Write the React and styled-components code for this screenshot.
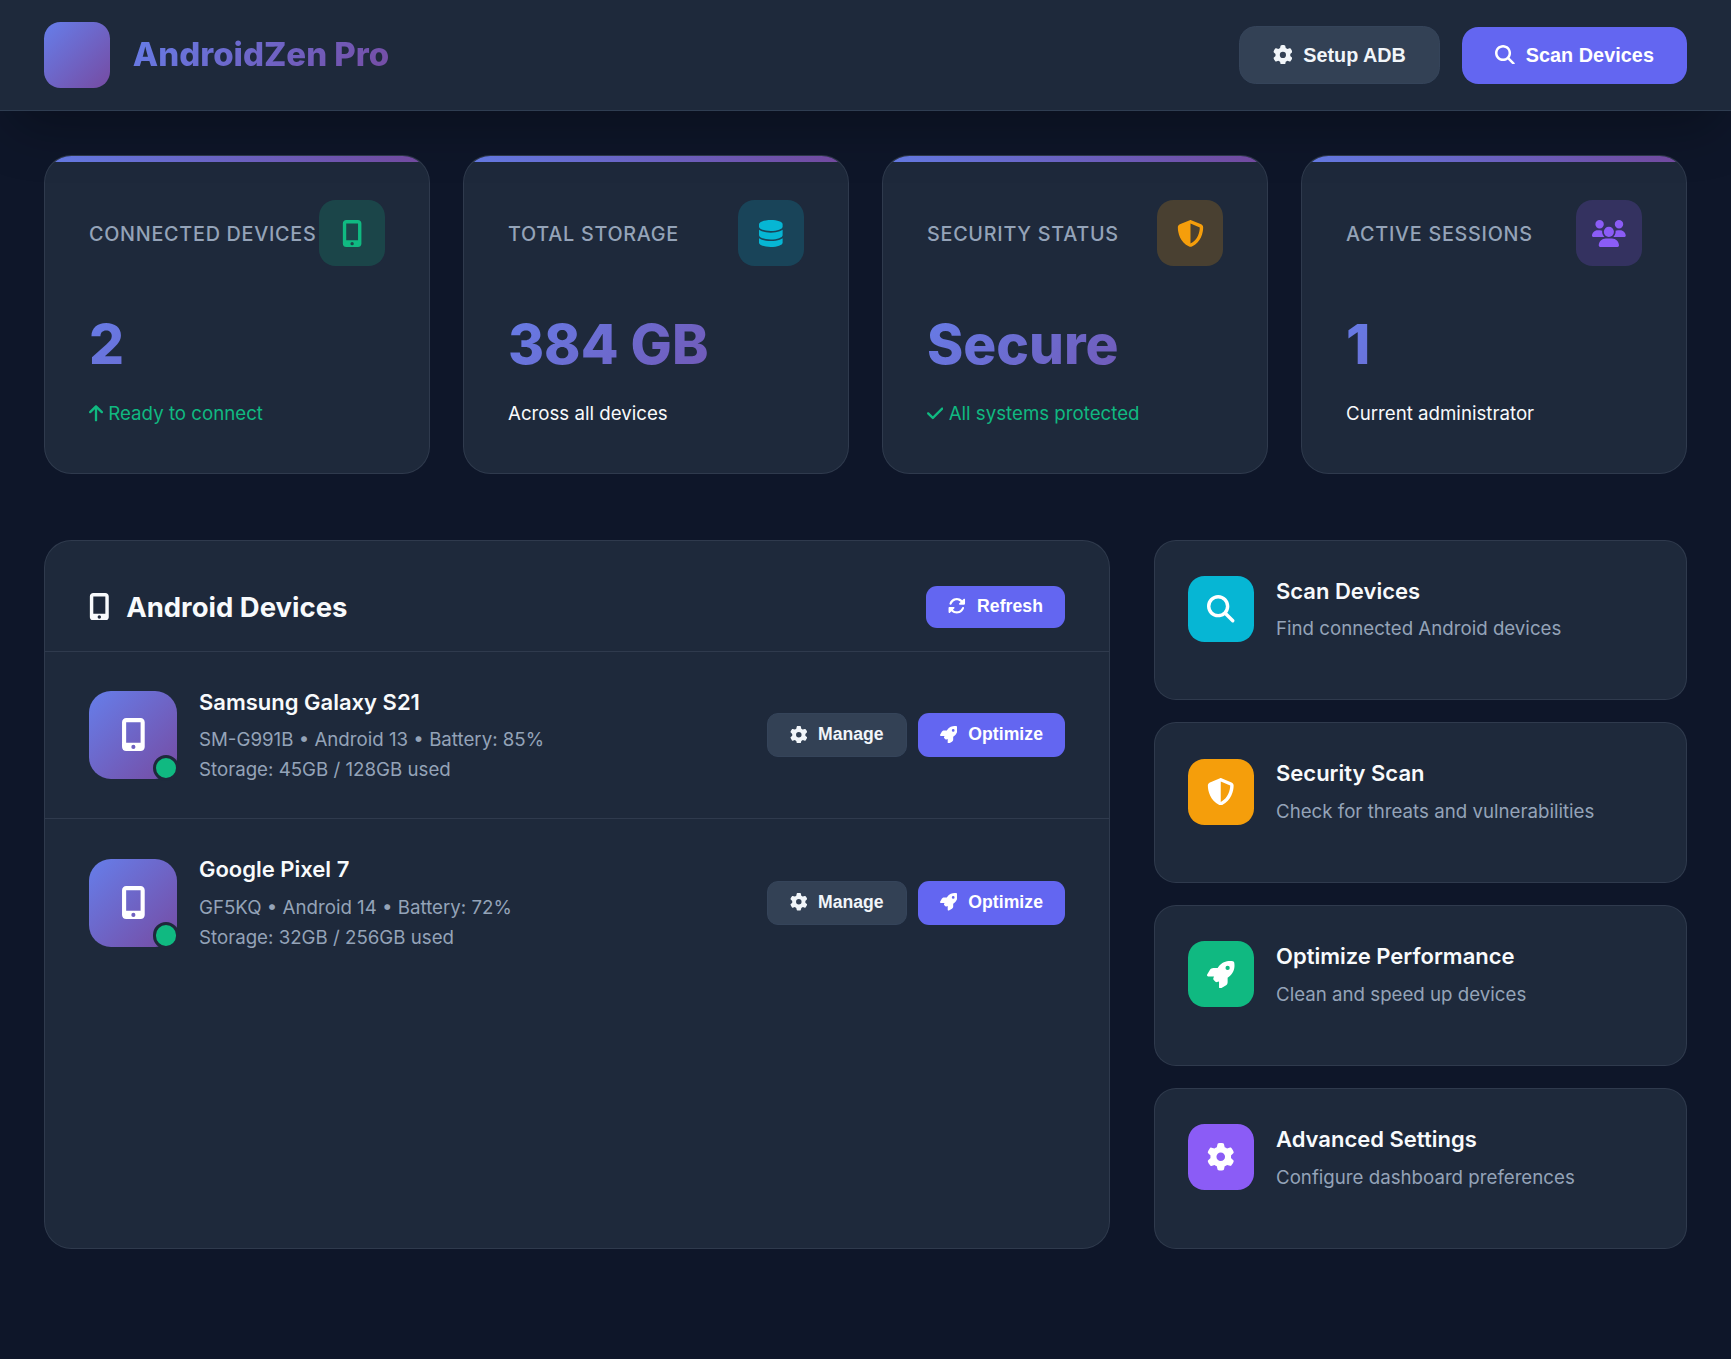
import React from "react";
import styled, { createGlobalStyle, css } from "styled-components";
import {
  FaMobileScreenButton,
  FaDatabase,
  FaShieldHalved,
  FaUsers,
  FaGear,
  FaMagnifyingGlass,
  FaRotate,
  FaRocket,
  FaArrowUp,
  FaCheck,
} from "react-icons/fa6";

const gradient = "#667eea 0%, #764ba2 100%";
const border = "rgba(148, 163, 184, 0.15)";

const GlobalStyle = createGlobalStyle`
  *, *::before, *::after { box-sizing: border-box; margin: 0; padding: 0; }
  body {
    margin: 0;
    min-height: 100vh;
    background: #0e1629;
    color: #f8fafc;
    font-family: Inter, "Liberation Sans", sans-serif;
    font-size: 17.6px;
    line-height: 1.6;
  }
  /* Each glyph keeps its natural advance width at a 1em height. */
  svg { flex: none; }
  svg[viewBox^="0 0 384"] { width: 0.75em; }
  svg[viewBox^="0 0 448"] { width: 0.875em; }
  svg[viewBox^="0 0 640"] { width: 1.25em; }
`;

const Page = styled.div`
  min-height: 1359px;
`;

const Header = styled.header`
  position: relative;
  z-index: 2;
  display: flex;
  align-items: center;
  justify-content: space-between;
  padding: 22px 44px;
  background: #1e293b;
  border-bottom: 1px solid #2f3d51;
  box-shadow: 0 27.5px 55px -13.2px rgba(0, 0, 0, 0.3);
`;

const Brand = styled.div`
  display: flex;
  align-items: center;
  gap: 22.8px;
`;

const Logo = styled.div`
  width: 66px;
  height: 66px;
  border-radius: 16.5px;
  background: linear-gradient(135deg, ${gradient});
`;

const BrandName = styled.h1`
  padding-bottom: 1.5px;
  font-size: 33px;
  font-weight: 800;
  background: linear-gradient(135deg, ${gradient});
  background-clip: text;
  -webkit-background-clip: text;
  color: transparent;
`;

const Actions = styled.div`
  display: flex;
  align-items: ${(p) => (p.$stretch ? "stretch" : "center")};
  gap: ${(p) => p.$gap}px;
`;

const Button = styled.button`
  display: inline-flex;
  align-items: center;
  gap: 11px;
  padding: 17px 33px 18px;
  border: 0;
  border-radius: 16.5px;
  font-family: "Liberation Sans", Arial, sans-serif;
  font-size: 19.8px;
  line-height: 22px;
  font-weight: 600;
  letter-spacing: 0.06px;
  color: #fff;
  background: #6366f1;
  ${(p) =>
    p.$secondary &&
    css`
      padding: 16.5px 33px 17.5px;
      letter-spacing: 0;
      color: #f1f5f9;
      background: #334155;
      border: 1px solid #35445a;
    `}
  ${(p) =>
    p.$small &&
    css`
      padding: 10.5px 22px 11.5px;
      border-radius: 11px;
      font-size: 17.6px;
      line-height: 20px;
    `}
`;

const Main = styled.main`
  padding: 44px;
`;

const Stats = styled.section`
  display: grid;
  grid-template-columns: repeat(4, 1fr);
  gap: 33px;
  margin-bottom: 66px;
`;

const StatCard = styled.article`
  position: relative;
  overflow: hidden;
  height: 318.6px;
  padding: 44px;
  background: #1e293b;
  border: 1px solid ${border};
  border-radius: 27.5px;

  &::before {
    content: "";
    position: absolute;
    top: 0;
    left: 0;
    right: 0;
    height: 5.5px;
    background: linear-gradient(135deg, ${gradient});
  }
`;

const StatHead = styled.div`
  display: flex;
  align-items: center;
  justify-content: space-between;
  margin-bottom: 33px;
`;

const StatLabel = styled.span`
  padding-top: 3px;
  font-size: 19.8px;
  font-weight: 500;
  letter-spacing: 0.72px;
  white-space: nowrap;
  text-transform: uppercase;
  color: #94a3b8;
`;

const StatIcon = styled.div`
  display: flex;
  flex: none;
  align-items: center;
  justify-content: center;
  width: 66px;
  height: 66px;
  border-radius: 16.5px;
  font-size: 27px;
  color: ${(p) => p.$color};
  background: ${(p) => p.$color}33;
`;

const StatValue = styled.div`
  font-size: 55px;
  font-weight: 800;
  line-height: 90px;
  background: linear-gradient(135deg, ${gradient});
  background-clip: text;
  -webkit-background-clip: text;
  color: transparent;
`;

const StatNote = styled.div`
  margin-top: 10px;
  font-size: 18.7px;
  color: ${(p) => (p.$good ? "#10b981" : "#f8fafc")};

  svg {
    vertical-align: -0.125em;
  }
`;

const Content = styled.section`
  display: grid;
  grid-template-columns: 2fr 1fr;
  gap: 44px;
  height: 709px;
`;

const Panel = styled.div`
  overflow: hidden;
  background: #1e293b;
  border: 1px solid ${border};
  border-radius: 27.5px;
`;

const PanelHead = styled.div`
  display: flex;
  align-items: center;
  justify-content: space-between;
  height: 111px;
  padding: 44px 44px 22px;
  border-bottom: 1px solid ${border};
`;

const PanelTitle = styled.h2`
  display: flex;
  align-items: center;
  gap: 16.5px;
  font-size: 27.5px;
  font-weight: 700;
  line-height: 44px;
  color: #f8fafc;
`;

const Device = styled.div`
  display: flex;
  align-items: center;
  gap: 22px;
  padding: 33px 44px;
  border-bottom: 1px solid ${border};

  &:last-child {
    border-bottom: 0;
  }
`;

const Avatar = styled.div`
  position: relative;
  display: flex;
  align-items: center;
  justify-content: center;
  width: 88px;
  height: 88px;
  border-radius: 22px;
  font-size: 33px;
  color: #fff;
  background: linear-gradient(135deg, ${gradient});
`;

const Online = styled.i`
  position: absolute;
  right: -2.2px;
  bottom: -2.2px;
  width: 26.4px;
  height: 26.4px;
  border: 3.3px solid #1e293b;
  border-radius: 50%;
  background: #10b981;
`;

const DeviceInfo = styled.div`
  flex: 1;
`;

const ItemTitle = styled.h3`
  margin-bottom: 5.5px;
  font-size: 22px;
  font-weight: 600;
  line-height: 35.2px;
  color: #f8fafc;
`;

const ItemText = styled.p`
  font-size: 18.7px;
  line-height: 30px;
  color: #94a3b8;
`;

const ActionList = styled.div`
  display: grid;
  grid-template-rows: repeat(4, 1fr);
  gap: 22px;
`;

const ActionCard = styled.div`
  padding: 33px;
  background: #1e293b;
  border: 1px solid ${border};
  border-radius: 22px;
`;

const ActionRow = styled.div`
  display: flex;
  align-items: center;
  gap: 22px;
`;

const ActionIcon = styled.div`
  display: flex;
  align-items: center;
  justify-content: center;
  width: 66px;
  height: 66px;
  border-radius: 16.5px;
  font-size: 27.5px;
  color: #fff;
  background: ${(p) => p.$color};
`;

const stats = [
  { label: "Connected Devices", value: "2", note: "Ready to connect", NoteIcon: FaArrowUp, Icon: FaMobileScreenButton, color: "#10b981" },
  { label: "Total Storage", value: "384 GB", note: "Across all devices", Icon: FaDatabase, color: "#06b6d4" },
  { label: "Security Status", value: "Secure", note: "All systems protected", NoteIcon: FaCheck, Icon: FaShieldHalved, color: "#f59e0b" },
  { label: "Active Sessions", value: "1", note: "Current administrator", Icon: FaUsers, color: "#8b5cf6" },
];

const devices = [
  { name: "Samsung Galaxy S21", info: "SM-G991B • Android 13 • Battery: 85%", storage: "Storage: 45GB / 128GB used" },
  { name: "Google Pixel 7", info: "GF5KQ • Android 14 • Battery: 72%", storage: "Storage: 32GB / 256GB used" },
];

const actions = [
  { title: "Scan Devices", text: "Find connected Android devices", Icon: FaMagnifyingGlass, color: "#06b6d4" },
  { title: "Security Scan", text: "Check for threats and vulnerabilities", Icon: FaShieldHalved, color: "#f59e0b" },
  { title: "Optimize Performance", text: "Clean and speed up devices", Icon: FaRocket, color: "#10b981" },
  { title: "Advanced Settings", text: "Configure dashboard preferences", Icon: FaGear, color: "#8b5cf6" },
];

export default function App() {
  return (
    <Page>
      <GlobalStyle />
      <Header>
        <Brand>
          <Logo />
          <BrandName>AndroidZen Pro</BrandName>
        </Brand>
        <Actions $gap={22}>
          <Button $secondary><FaGear />Setup ADB</Button>
          <Button><FaMagnifyingGlass />Scan Devices</Button>
        </Actions>
      </Header>
      <Main>
        <Stats>
          {stats.map(({ label, value, note, NoteIcon, Icon, color }) => (
            <StatCard key={label}>
              <StatHead>
                <StatLabel>{label}</StatLabel>
                <StatIcon $color={color}><Icon /></StatIcon>
              </StatHead>
              <StatValue>{value}</StatValue>
              <StatNote $good={Boolean(NoteIcon)}>
                {NoteIcon && <><NoteIcon />{" "}</>}
                {note}
              </StatNote>
            </StatCard>
          ))}
        </Stats>
        <Content>
          <Panel>
            <PanelHead>
              <PanelTitle><FaMobileScreenButton />Android Devices</PanelTitle>
              <Button $small><FaRotate />Refresh</Button>
            </PanelHead>
            {devices.map((d) => (
              <Device key={d.name}>
                <Avatar><FaMobileScreenButton /><Online /></Avatar>
                <DeviceInfo>
                  <ItemTitle>{d.name}</ItemTitle>
                  <ItemText>{d.info}</ItemText>
                  <ItemText>{d.storage}</ItemText>
                </DeviceInfo>
                <Actions $gap={11} $stretch>
                  <Button $small $secondary><FaGear />Manage</Button>
                  <Button $small><FaRocket />Optimize</Button>
                </Actions>
              </Device>
            ))}
          </Panel>
          <ActionList>
            {actions.map(({ title, text, Icon, color }) => (
              <ActionCard key={title}>
                <ActionRow>
                  <ActionIcon $color={color}><Icon /></ActionIcon>
                  <div>
                    <ItemTitle>{title}</ItemTitle>
                    <ItemText>{text}</ItemText>
                  </div>
                </ActionRow>
              </ActionCard>
            ))}
          </ActionList>
        </Content>
      </Main>
    </Page>
  );
}
